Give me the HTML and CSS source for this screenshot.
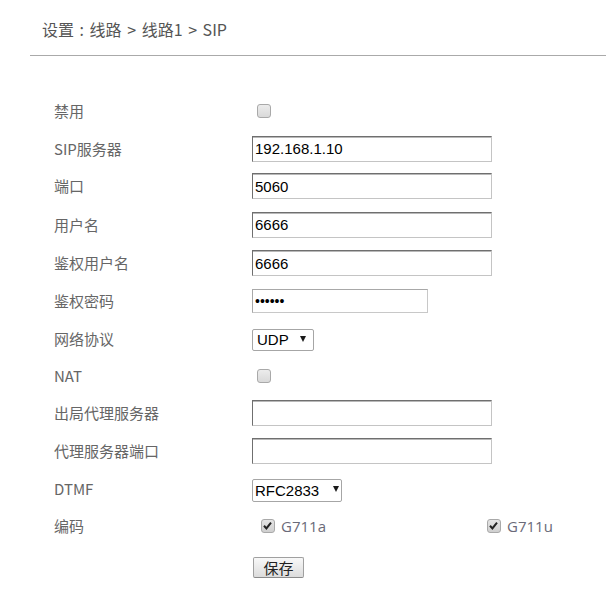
FILE: index.html
```html
<!DOCTYPE html>
<html lang="zh-CN">
<head>
<meta charset="utf-8">
<title>SIP</title>
<link rel="stylesheet" href="styles.css">
</head>
<body>
<div class="page">
  <div class="crumb"><span class="crumb-text">设置 : 线路 &gt; 线路1 &gt; SIP</span></div>
  <form class="form">
    <div class="label">禁用</div>
    <div class="ctrl"><span class="cb"></span></div>

    <div class="label">SIP服务器</div>
    <div class="ctrl"><input class="text" type="text" value="192.168.1.10"></div>

    <div class="label">端口</div>
    <div class="ctrl"><input class="text" type="text" value="5060"></div>

    <div class="label">用户名</div>
    <div class="ctrl"><input class="text" type="text" value="6666"></div>

    <div class="label">鉴权用户名</div>
    <div class="ctrl"><input class="text" type="text" value="6666"></div>

    <div class="label">鉴权密码</div>
    <div class="ctrl"><input class="text pwd" type="password" value="666666"></div>

    <div class="label">网络协议</div>
    <div class="ctrl"><span class="sel sel-udp"><select class="select"><option>UDP</option></select></span></div>

    <div class="label">NAT</div>
    <div class="ctrl"><span class="cb"></span></div>

    <div class="label">出局代理服务器</div>
    <div class="ctrl"><input class="text" type="text" value=""></div>

    <div class="label">代理服务器端口</div>
    <div class="ctrl"><input class="text" type="text" value=""></div>

    <div class="label">DTMF</div>
    <div class="ctrl"><span class="sel sel-dtmf"><select class="select"><option>RFC2833</option></select></span></div>

    <div class="label">编码</div>
    <div class="ctrl codecs">
      <span class="codec"><span class="cb checked"><svg viewBox="0 0 13 13" width="13" height="13"><path d="M3 6.8 L5.4 9.4 L10 3.6" fill="none" stroke="#222" stroke-width="2"/></svg></span><span class="codec-name">G711a</span></span>
      <span class="codec"><span class="cb checked"><svg viewBox="0 0 13 13" width="13" height="13"><path d="M3 6.8 L5.4 9.4 L10 3.6" fill="none" stroke="#222" stroke-width="2"/></svg></span><span class="codec-name">G711u</span></span>
    </div>

    <div class="label"></div>
    <div class="ctrl save-cell"><button class="btn" type="button">保存</button></div>
  </form>
</div>
</body>
</html>
```

FILE: styles.css
```css
html, body {
  margin: 0;
  padding: 0;
  background: #fff;
}

.page {
  font-family: "Noto Sans CJK SC", "Liberation Sans", sans-serif;
  color: #666;
  overflow: hidden;
}

.crumb {
  margin-left: 30px;
  height: 55px;
  border-bottom: 1px solid #aaa;
  padding-left: 12px;
}

.crumb-text {
  display: block;
  padding-top: 20px;
  font-size: 16px;
  line-height: 18px;
  word-spacing: 2px;
  color: #555;
}

.form {
  margin: 36px 0 0 54px;
  display: grid;
  grid-template-columns: 198px 1fr;
  grid-template-rows: 38px 37px 38px 39px 38px 38px 37px 37px 38px 38px 38px 35px 48px;
  align-items: center;
}

.label {
  font-size: 15px;
  line-height: 18px;
  color: #666;
}

.ctrl {
  display: flex;
  align-items: center;
  min-width: 0;
}

.text {
  box-sizing: border-box;
  width: 240px;
  height: 26px;
  margin: 0;
  padding: 0 2px;
  font-family: "Liberation Sans", Arial, sans-serif;
  font-size: 15px;
  color: #000;
  background: #fff;
  border: 1px solid;
  border-color: #6f6f6f #c4c4c4 #c4c4c4 #6f6f6f;
  box-shadow: inset 0 1px 0 #b8b8b8;
  outline: none;
}

.pwd {
  width: 176px;
  height: 24px;
  border-color: #a8a8a8 #c8c8c8 #c8c8c8 #a8a8a8;
  box-shadow: none;
  font-size: 14px;
}

.cb {
  box-sizing: border-box;
  display: inline-block;
  width: 14px;
  height: 14px;
  margin-left: 5px;
  border: 1px solid #a9a9a9;
  border-radius: 3px;
  background: linear-gradient(#ececec, #d9d9d9);
}

.cb svg {
  display: block;
  margin: -1px 0 0 -1px;
}

.sel {
  position: relative;
  display: inline-block;
}

.sel::after {
  content: "";
  position: absolute;
  top: 50%;
  margin-top: -3px;
  border-left: 3.5px solid transparent;
  border-right: 3.5px solid transparent;
  border-top: 6px solid #1a1a1a;
}

.sel-udp::after { right: 8px; }
.sel-dtmf::after { right: 3px; }

.select {
  -webkit-appearance: none;
  appearance: none;
  box-sizing: border-box;
  margin: 0;
  padding: 0 0 0 4px;
  font-family: "Liberation Sans", Arial, sans-serif;
  font-size: 15px;
  color: #000;
  background: #fff;
  border: 1px solid #a6a6a6;
  border-radius: 2px;
  outline: none;
}

.sel-udp .select { width: 62px; height: 22px; }
.sel-dtmf .select { width: 90px; height: 23px; padding-left: 2px; }

.codecs {
  display: grid;
  grid-template-columns: 226px auto;
  padding-left: 4px;
}

.codec {
  display: flex;
  align-items: center;
}

.codec .cb {
  background: linear-gradient(#e4e4e4, #cfcfcf);
}

.codec-name {
  margin-left: 6px;
  font-family: "Open Sans", "Noto Sans", sans-serif;
  font-size: 15px;
  color: #6a6a78;
}

.save-cell {
  padding-left: 1px;
}

.btn {
  box-sizing: border-box;
  width: 51px;
  height: 21px;
  margin: 0;
  padding: 0;
  font-family: "Noto Sans CJK SC", sans-serif;
  font-size: 15px;
  line-height: 17px;
  color: #222;
  background: linear-gradient(#f8f8f8, #dcdcdc);
  border: 1px solid #a0a0a0;
  border-bottom-color: #8a8a8a;
  border-radius: 2px;
}
```
